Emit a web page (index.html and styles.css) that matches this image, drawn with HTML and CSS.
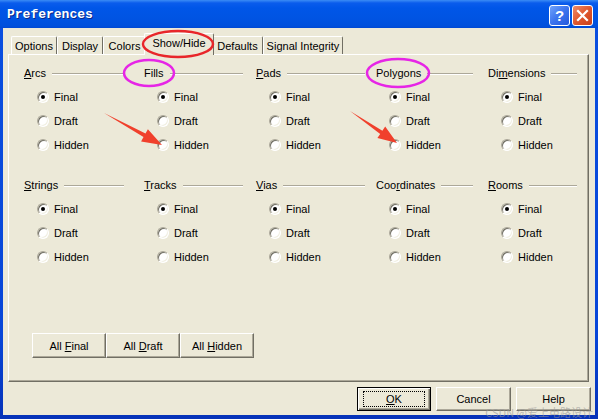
FILE: index.html
```html
<!DOCTYPE html>
<html>
<head>
<meta charset="utf-8">
<link rel="stylesheet" href="styles.css">
</head>
<body>
<div class="window">
  <div class="titlebar">
    <span class="title">Preferences</span>
    <div class="tb-btns">
      <span class="tb-btn tb-help">?</span>
      <span class="tb-btn tb-close"><svg width="13" height="13" viewBox="0 0 13 13"><path d="M2 2 L11 11 M11 2 L2 11" stroke="#fff" stroke-width="2.2" stroke-linecap="square"/></svg></span>
    </div>
  </div>
  <div class="client">
    <div class="tabs">
      <span class="tab t-options">Options</span>
      <span class="tab t-display">Display</span>
      <span class="tab t-colors">Colors</span>
      <span class="tab t-show selected">Show/Hide</span>
      <span class="tab t-defaults">Defaults</span>
      <span class="tab t-signal">Signal Integrity</span>
    </div>
    <div class="panel">
      <div class="groups">
        <div class="group c1"><div class="heading"><span><u>A</u>rcs</span><i class="line"></i></div>
          <div class="opt"><span class="radio on"></span>Final</div><div class="opt"><span class="radio"></span>Draft</div><div class="opt"><span class="radio"></span>Hidden</div></div>
        <div class="group c2"><div class="heading"><span>Fills</span><i class="line"></i></div>
          <div class="opt"><span class="radio on"></span>Final</div><div class="opt"><span class="radio"></span>Draft</div><div class="opt"><span class="radio"></span>Hidden</div></div>
        <div class="group c3"><div class="heading"><span><u>P</u>ads</span><i class="line"></i></div>
          <div class="opt"><span class="radio on"></span>Final</div><div class="opt"><span class="radio"></span>Draft</div><div class="opt"><span class="radio"></span>Hidden</div></div>
        <div class="group c4"><div class="heading"><span>Polygons</span><i class="line"></i></div>
          <div class="opt"><span class="radio on"></span>Final</div><div class="opt"><span class="radio"></span>Draft</div><div class="opt"><span class="radio"></span>Hidden</div></div>
        <div class="group c5"><div class="heading"><span>Di<u>m</u>ensions</span><i class="line"></i></div>
          <div class="opt"><span class="radio on"></span>Final</div><div class="opt"><span class="radio"></span>Draft</div><div class="opt"><span class="radio"></span>Hidden</div></div>
        <div class="group c1"><div class="heading"><span><u>S</u>trings</span><i class="line"></i></div>
          <div class="opt"><span class="radio on"></span>Final</div><div class="opt"><span class="radio"></span>Draft</div><div class="opt"><span class="radio"></span>Hidden</div></div>
        <div class="group c2"><div class="heading"><span><u>T</u>racks</span><i class="line"></i></div>
          <div class="opt"><span class="radio on"></span>Final</div><div class="opt"><span class="radio"></span>Draft</div><div class="opt"><span class="radio"></span>Hidden</div></div>
        <div class="group c3"><div class="heading"><span><u>V</u>ias</span><i class="line"></i></div>
          <div class="opt"><span class="radio on"></span>Final</div><div class="opt"><span class="radio"></span>Draft</div><div class="opt"><span class="radio"></span>Hidden</div></div>
        <div class="group c4"><div class="heading"><span>Coo<u>r</u>dinates</span><i class="line"></i></div>
          <div class="opt"><span class="radio on"></span>Final</div><div class="opt"><span class="radio"></span>Draft</div><div class="opt"><span class="radio"></span>Hidden</div></div>
        <div class="group c5"><div class="heading"><span><u>R</u>ooms</span><i class="line"></i></div>
          <div class="opt"><span class="radio on"></span>Final</div><div class="opt"><span class="radio"></span>Draft</div><div class="opt"><span class="radio"></span>Hidden</div></div>
      </div>
      <div class="all-btns">
        <span class="btn"><span>All <u>F</u>inal</span></span>
        <span class="btn"><span>All <u>D</u>raft</span></span>
        <span class="btn"><span>All <u>H</u>idden</span></span>
      </div>
    </div>
    <div class="footer">
      <span class="btn fbtn default"><span class="focus"><span><u>O</u>K</span></span></span>
      <span class="btn fbtn">Cancel</span>
      <span class="btn fbtn">Help</span>
    </div>
  </div>
  <svg class="annot" width="598" height="419" viewBox="0 0 598 419">
    <ellipse cx="178" cy="44" rx="35" ry="13" fill="none" stroke="#e8262a" stroke-width="2.5"/>
    <ellipse cx="149" cy="73" rx="25" ry="13" fill="none" stroke="#e625e6" stroke-width="2.5"/>
    <ellipse cx="398" cy="73" rx="31" ry="14" fill="none" stroke="#e625e6" stroke-width="2.5"/>
    <polygon points="104,113 145.5,133.5 147.9,129.2 162,145 141.1,141.4 143.5,137" fill="#f0402c"/>
    <polygon points="350,111 382.4,130.7 385.2,126.5 397,143 377.4,138.1 380.2,133.9" fill="#f0402c"/>
  </svg>
  <div class="watermark">CSDN @爱上电路设计</div>
</div>
</body>
</html>
```

FILE: styles.css
```css
html, body { margin: 0; padding: 0; }
body {
  font-family: "Liberation Sans", Arial, sans-serif;
  font-size: 11px;
  color: #000;
}
.window {
  position: relative;
  width: 598px;
  height: 419px;
  box-sizing: border-box;
  display: flex;
  flex-direction: column;
  overflow: hidden;
  background: linear-gradient(to bottom, #0a4fe0 0%, #0846d8 80%, #0632b8 100%);
}
.titlebar {
  height: 28px;
  flex: none;
  display: flex;
  align-items: center;
  padding: 0 5px 0 7px;
  background: linear-gradient(to bottom, #3b8cf5 0px, #0a5cec 3px, #0056e8 8px, #0054e3 18px, #0050dc 26px, #0048d4 28px);
}
.title {
  flex: 1;
  font: bold 13px "Liberation Mono", "DejaVu Sans Mono", monospace;
  color: #fff;
  text-shadow: 1px 1px #0b2a8a;
  padding-top: 1px;
}
.tb-btns {
  display: flex;
  gap: 2px;
  margin-top: 2px;
}
.tb-btn {
  width: 21px;
  height: 21px;
  box-sizing: border-box;
  border: 1px solid #fff;
  border-radius: 3px;
  display: flex;
  align-items: center;
  justify-content: center;
}
.tb-help {
  background: linear-gradient(135deg, #6fa2fb 0%, #3c74ee 50%, #2458dc 100%);
  color: #fff;
  font: bold 15px "Liberation Sans", Arial, sans-serif;
}
.tb-close {
  background: linear-gradient(135deg, #ee8c6a 0%, #e0582e 50%, #c8401c 100%);
}
.client {
  flex: 1;
  margin: 0 3px 4px;
  background: #ece9d8;
  padding-top: 5px;
  display: flex;
  flex-direction: column;
}
.tabs {
  display: flex;
  align-items: flex-end;
  height: 21px;
  margin-left: 8px;
  position: relative;
  z-index: 2;
}
.tab {
  height: 18px;
  box-sizing: border-box;
  border-top: 1px solid #fff;
  border-left: 1px solid #fff;
  border-right: 1px solid #716f64;
  border-radius: 2px 2px 0 0;
  background: #ece9d8;
  display: flex;
  align-items: center;
  justify-content: center;
  line-height: 14px;
}
.t-options { width: 46px; }
.t-display { width: 46px; }
.t-colors { width: 43px; }
.t-show { width: 70px; margin: 0 -2px; }
.t-defaults { width: 51px; }
.t-signal { width: 80px; }
.tab.selected {
  height: 22px;
  margin-bottom: -1px;
  position: relative;
  z-index: 3;
  padding-bottom: 3px;
}
.panel {
  height: 328px;
  box-sizing: border-box;
  margin: 0 6px 0 5px;
  border-top: 1px solid #fff;
  border-left: 1px solid #fff;
  border-right: 1px solid #716f64;
  border-bottom: 1px solid #716f64;
  box-shadow: inset -1px -1px #aca899;
  padding: 6px 0 0 15px;
}
.groups {
  display: grid;
  grid-template-columns: 120px 112px 120px 112px 100px;
  row-gap: 16px;
}
.heading {
  height: 24px;
  display: flex;
  align-items: center;
}
.c1 .heading { width: 100px; }
.c2 .heading { width: 99px; }
.c3 .heading { width: 109px; }
.c4 .heading { width: 97px; }
.c5 .heading { width: 89px; }
.line {
  flex: 1;
  height: 0;
  margin-left: 6px;
  margin-top: 1px;
  border-top: 1px solid #aca899;
  border-bottom: 1px solid #fff;
}
.opt {
  height: 24px;
  display: flex;
  align-items: center;
  padding-left: 13px;
  gap: 5px;
}
.radio {
  position: relative;
  width: 12px;
  height: 12px;
  box-sizing: border-box;
  border-radius: 50%;
  border: 1px solid;
  border-color: #aca899 #fff #fff #aca899;
  box-shadow: inset 1px 1px #716f64, inset -1px -1px #f1efe2;
  background: #fff;
  flex: none;
}
.radio.on::after {
  content: "";
  position: absolute;
  left: 3px;
  top: 3px;
  width: 4px;
  height: 4px;
  border-radius: 50%;
  background: #000;
}
.all-btns {
  display: flex;
  margin: 64px 0 0 8px;
}
.btn {
  box-sizing: border-box;
  width: 74px;
  height: 25px;
  border: 1px solid;
  border-color: #fff #716f64 #716f64 #fff;
  box-shadow: inset -1px -1px #aca899;
  background: #ece9d8;
  display: flex;
  align-items: center;
  justify-content: center;
  line-height: 12px;
}
.footer {
  display: flex;
  justify-content: flex-end;
  gap: 5px;
  padding: 5px 4px 0 0;
}
.fbtn {
  width: 75px;
  height: 24px;
}
.fbtn.default {
  width: 74px;
  border: 1px solid #000;
  box-shadow: inset 1px 1px #fff, inset -1px -1px #716f64, inset -2px -2px #aca899;
}
.focus {
  box-sizing: border-box;
  width: 62px;
  height: 16px;
  border: 1px dotted #000;
  display: flex;
  align-items: center;
  justify-content: center;
}
.annot {
  position: absolute;
  left: 0;
  top: 0;
  z-index: 10;
  pointer-events: none;
}
.watermark {
  position: absolute;
  right: 5px;
  bottom: 1px;
  z-index: 11;
  font: 11px "Noto Sans CJK SC", "Liberation Sans", sans-serif;
  color: rgba(150, 150, 150, 0.6);
  line-height: 11px;
}
```
